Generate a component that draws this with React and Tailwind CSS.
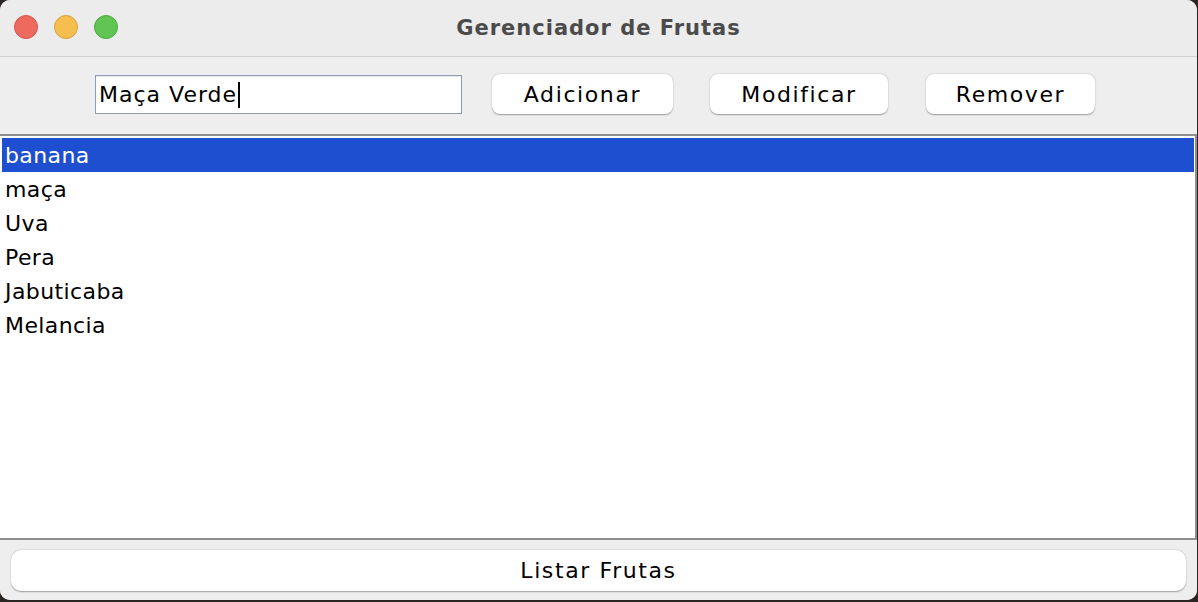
import React, { useState } from 'react'

const FRUITS = ['banana', 'maça', 'Uva', 'Pera', 'Jabuticaba', 'Melancia']

const font = { fontFamily: '"DejaVu Sans", "Noto Sans", sans-serif' }

function MacButton({ children, className = '' }) {
  return (
    <button
      className={`flex items-center justify-center rounded-[8px] bg-white text-[22px] tracking-[1.6px] text-black shadow-[0_0.5px_1.5px_rgba(0,0,0,0.35)] ${className}`}
    >
      {children}
    </button>
  )
}

export default function App() {
  const [selected, setSelected] = useState(0)

  return (
    <div className="h-[602px] w-[1198px] overflow-hidden bg-[#2a2522]" style={font}>
      <div className="flex h-[600px] w-[1197px] flex-col overflow-hidden rounded-[10px] bg-[#ededed]">
        {/* title bar */}
        <div className="relative flex h-[57px] shrink-0 items-center justify-center border-b border-[#d2d2d2] bg-[#ececec] pt-[1px]">
          <div className="absolute left-[14px] top-[15px] flex gap-[16px]">
            <span className="h-[24px] w-[24px] rounded-full border border-[#d8554d] bg-[#ee6a5f]" />
            <span className="h-[24px] w-[24px] rounded-full border border-[#d9a03e] bg-[#f5be4f]" />
            <span className="h-[24px] w-[24px] rounded-full border border-[#4fa83f] bg-[#61c554]" />
          </div>
          <span className="text-[21px] font-bold tracking-[1px] text-[#4b4b4b]">Gerenciador de Frutas</span>
        </div>

        {/* toolbar */}
        <div className="flex h-[77px] shrink-0 items-start bg-[#eeeeee] pl-[95px] pt-[17px]">
          <div className="mt-[1px] flex h-[39px] w-[367px] items-center border border-[#8d9cb2] bg-white pl-[3px] shadow-[inset_0_1px_1px_rgba(0,0,0,0.1)]">
            <span className="text-[22px] tracking-[1px] text-black">Maça Verde</span>
            <span className="ml-[1px] h-[26px] w-[2px] bg-black" />
          </div>
          <MacButton className="ml-[30px] h-[40px] w-[181px]">Adicionar</MacButton>
          <MacButton className="ml-[37px] h-[40px] w-[178px]">Modificar</MacButton>
          <MacButton className="ml-[38px] h-[40px] w-[169px]">Remover</MacButton>
        </div>

        {/* list */}
        <div className="h-[406px] shrink-0 border-y-2 border-r-2 border-[#8e8e8e] bg-white pt-[2px] pl-[2px] pr-[1px]">
          {FRUITS.map((f, i) => (
            <div
              key={f}
              onClick={() => setSelected(i)}
              className={`flex h-[34px] items-center pl-[3px] text-[22px] tracking-[0.4px] ${
                i === selected ? 'bg-[#1f4fd1] text-white' : 'text-black'
              }`}
            >
              {f}
            </div>
          ))}
        </div>

        {/* bottom */}
        <div className="flex flex-1 items-center bg-[#eeeeee] px-[11px] pt-[1px]">
          <MacButton className="h-[41px] w-full rounded-[10px]">Listar Frutas</MacButton>
        </div>
      </div>
    </div>
  )
}
